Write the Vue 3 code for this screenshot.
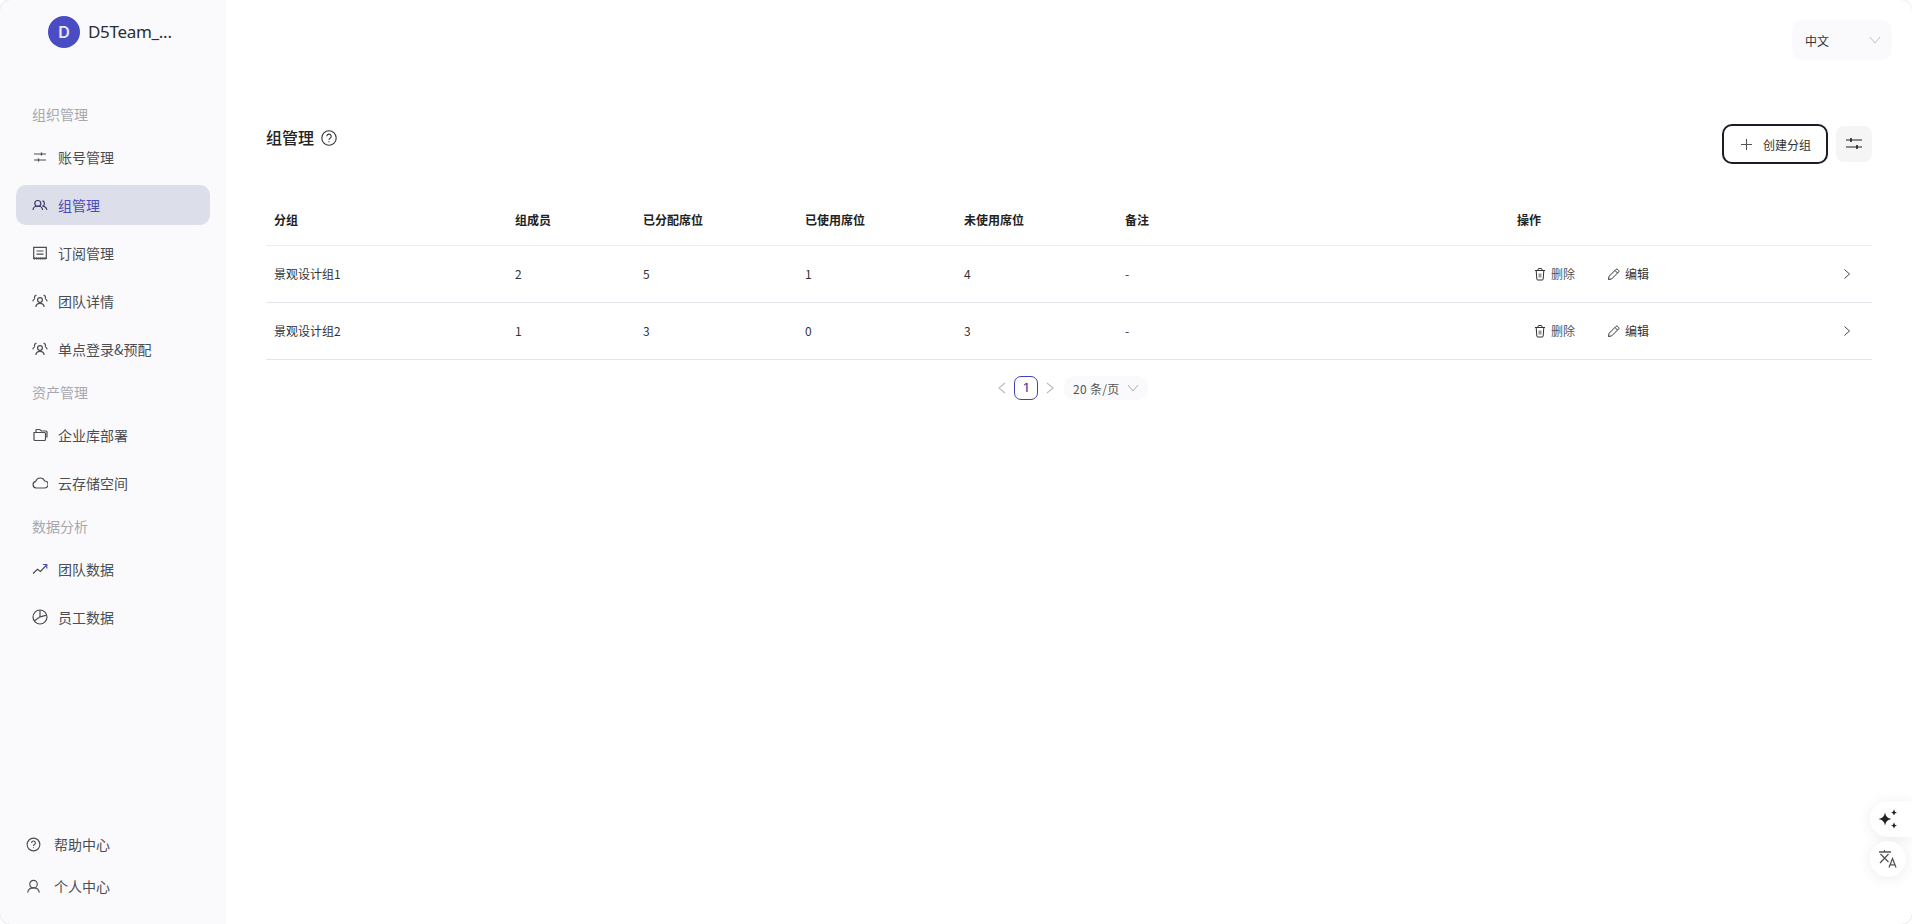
<script setup>
const groups = [
  { title: '组织管理', items: [
    { label: '账号管理', icon: 'sliders' },
    { label: '组管理', icon: 'users', active: true },
    { label: '订阅管理', icon: 'sub' },
    { label: '团队详情', icon: 'team' },
    { label: '单点登录&预配', icon: 'team' },
  ]},
  { title: '资产管理', items: [
    { label: '企业库部署', icon: 'folder' },
    { label: '云存储空间', icon: 'cloud' },
  ]},
  { title: '数据分析', items: [
    { label: '团队数据', icon: 'trend' },
    { label: '员工数据', icon: 'pie' },
  ]},
]
const columns = ['分组', '组成员', '已分配席位', '已使用席位', '未使用席位', '备注', '操作', '']
const rows = [
  ['景观设计组1', '2', '5', '1', '4', '-'],
  ['景观设计组2', '1', '3', '0', '3', '-'],
]
</script>

<template>
  <div class="page">
    <aside class="side">
      <div class="brand">
        <span class="avatar">D</span>
        <span class="brand-name">D5Team_...</span>
      </div>
      <nav class="nav">
        <template v-for="g in groups" :key="g.title">
          <div class="group-title">{{ g.title }}</div>
          <a v-for="it in g.items" :key="it.label" class="nav-item" :class="{ active: it.active }">
            <svg class="nav-ico" viewBox="0 0 16 16" fill="none" stroke="currentColor" stroke-width="1.200">
              <template v-if="it.icon === 'sliders'">
                <path d="M2 5h12M2 11h12" /><path d="M9.500 3.500v3M6.500 9.500v3" stroke-width="1.400" />
              </template>
              <template v-else-if="it.icon === 'users'">
                <circle cx="5.800" cy="6.500" r="3" /><path d="M1 13c.2-2.500 2-4 4.800-4s4.600 1.500 4.800 4M10.500 3.600a3 3 0 0 1 0 5.600c2.400.3 4 1.800 4.300 3.800" />
              </template>
              <template v-else-if="it.icon === 'sub'">
                <path d="M1.700 2.300h12.600v11H1.700zM4.500 6h7M4.500 9.200h7" /><path d="M1.700 13.500h12.600" stroke-width="1.800" stroke-dasharray="1.500 .6" />
              </template>
              <template v-else-if="it.icon === 'team'">
                <circle cx="8" cy="7" r="2.400" /><path d="M3.800 14c.3-2.200 2-3.600 4.200-3.600s3.900 1.400 4.200 3.600M4.500 2.300a1.900 1.900 0 0 0-1.500 3.200M.8 8.300c.2-1.200.9-2.200 2-2.600M11.500 2.300a1.900 1.900 0 0 1 1.500 3.200M15.200 8.300c-.2-1.200-.9-2.200-2-2.600" />
              </template>
              <template v-else-if="it.icon === 'folder'">
                <path d="M2 5.500v7a1 1 0 0 0 1 1h9.500a1 1 0 0 0 1-1V6.500a1 1 0 0 0-1-1H2zM4 5.500V3.500a1 1 0 0 1 1-1h2.800l1.500 1.500h4.700a1 1 0 0 1 1 1v5.500" />
              </template>
              <template v-else-if="it.icon === 'cloud'">
                <path d="M4.200 13a3.400 3.400 0 0 1-.5-6.700A4.800 4.800 0 0 1 12.700 6a3.500 3.500 0 0 1-.3 7z" />
              </template>
              <template v-else-if="it.icon === 'trend'">
                <path d="M1 12.500l4.500-4.300 3 2.300L14.500 4" /><path d="M10.800 3.500h4v4" stroke="#4a4fc4" />
              </template>
              <template v-else-if="it.icon === 'pie'">
                <circle cx="8" cy="8" r="7" /><path d="M8 1v6.800L2.200 12M8 7.800l6.800-1.600" />
              </template>
            </svg>
            <span>{{ it.label }}</span>
          </a>
        </template>
      </nav>
      <div class="side-foot">
        <a class="foot-item">
          <svg class="nav-ico" viewBox="0 0 16 16" fill="none" stroke="currentColor" stroke-width="1.200">
            <circle cx="8" cy="8" r="6.800" /><path d="M6 6.300a2 2 0 1 1 3 1.700c-.7.400-1 .8-1 1.500" /><path d="M8 11v.9" />
          </svg>
          <span>帮助中心</span>
        </a>
        <a class="foot-item">
          <svg class="nav-ico" viewBox="0 0 16 16" fill="none" stroke="currentColor" stroke-width="1.200">
            <circle cx="8" cy="5.500" r="4" /><path d="M1.800 14.500c.4-3 2.800-5 6.200-5s5.800 2 6.200 5" />
          </svg>
          <span>个人中心</span>
        </a>
      </div>
    </aside>

    <main class="main">
      <div class="top">
        <div class="lang">
          <span>中文</span>
          <svg class="chev" viewBox="0 0 12 12" fill="none" stroke="#bdbdc4" stroke-width="1"><path d="M1 3l5 6 5-6" /></svg>
        </div>
      </div>
      <div class="head">
        <div class="title">
          <h1>组管理</h1>
          <svg class="help" viewBox="0 0 16 16" fill="none" stroke="#333" stroke-width="1.100">
            <circle cx="8" cy="8" r="7.200" /><path d="M5.800 6.300a2.200 2.200 0 1 1 3.300 1.900c-.8.500-1.100.9-1.100 1.600" /><path d="M8 11.200v1" />
          </svg>
        </div>
        <div class="actions">
          <button class="create">
            <svg class="plus" viewBox="0 0 11 11" fill="none" stroke="#555" stroke-width="1.100"><path d="M5.500 0v11M0 5.500h11" /></svg>
            <span>创建分组</span>
          </button>
          <button class="filter">
            <svg viewBox="0 0 16 16" width="16" height="16" fill="none" stroke="#222" stroke-width="1.200"><path d="M0 4h16M0 11h16" /><path d="M5 2v4M11 9v4" stroke-width="1.600" /></svg>
          </button>
        </div>
      </div>

      <div class="table">
        <div class="tr th">
          <div v-for="(c, i) in columns" :key="i" class="cell">{{ c }}</div>
        </div>
        <div v-for="r in rows" :key="r[0]" class="tr">
          <div v-for="(v, i) in r" :key="i" class="cell">{{ v }}</div>
          <div class="cell ops">
            <span class="op">
              <svg viewBox="0 0 14 14" width="14" height="14" fill="none" stroke="#333" stroke-width="1"><path d="M2 3.500h10M5 3.500V2a.8.800 0 0 1 .8-.5h2.400A.8.800 0 0 1 9 2v1.500M3.200 3.500l.6 8.500a1 1 0 0 0 1 1h4.400a1 1 0 0 0 1-1l.6-8.500" /><path d="M5.500 6.500h3v4h-3z" fill="#999" stroke="none" /></svg>
              <span class="op-del">删除</span>
            </span>
            <span class="op">
              <svg viewBox="0 0 14 14" width="14" height="14" fill="none" stroke="#333" stroke-width="1"><path d="M1.500 12.500l.6-3.200 7-7a1 1 0 0 1 1.400 0l1.200 1.200a1 1 0 0 1 0 1.400l-7 7zM8 3.500l2.500 2.500" /></svg>
              <span>编辑</span>
            </span>
          </div>
          <div class="cell more">
            <svg viewBox="0 0 12 12" width="12" height="12" fill="none" stroke="#444" stroke-width="1"><path d="M3.500 1.500l5 4.500-5 4.500" /></svg>
          </div>
        </div>
      </div>

      <div class="pager">
        <svg class="pg-arrow" viewBox="0 0 10 12" fill="none" stroke="#bbb" stroke-width="1.100"><path d="M8 1L2 6l6 5" /></svg>
        <span class="pg-num">1</span>
        <svg class="pg-arrow" viewBox="0 0 10 12" fill="none" stroke="#bbb" stroke-width="1.100"><path d="M2 1l6 5-6 5" /></svg>
        <div class="pg-size">
          <span>20 条/页</span>
          <svg viewBox="0 0 12 12" width="12" height="12" fill="none" stroke="#aaa" stroke-width="1"><path d="M1 3l5 6 5-6" /></svg>
        </div>
      </div>
    </main>

    <div class="fab fab-a">
      <svg viewBox="0 0 20 20" width="20" height="20" fill="#222">
        <path d="M7 3.500Q7.800 9.200 13.500 10 7.800 10.800 7 16.500 6.200 10.800 .5 10 6.200 9.200 7 3.500z" />
        <path d="M16 .5Q16.400 3.100 19 3.500 16.400 3.900 16 6.500 15.600 3.900 13 3.500 15.600 3.100 16 .5zM16 13.500Q16.400 16.100 19 16.500 16.400 16.900 16 19.500 15.600 16.900 13 16.500 15.600 16.100 16 13.500z" />
      </svg>
    </div>
    <div class="fab fab-b">
      <svg viewBox="0 0 20 20" width="20" height="20" fill="none" stroke="#555" stroke-width="1.300">
        <path d="M1 3h12M6.500 1v2M2.500 5l8 8M10.500 5L2 14" />
        <path d="M11 18.500l3.500-9 3.500 9M12 15.800h5" />
      </svg>
    </div>
    <div class="corners" aria-hidden="true"></div>
  </div>
</template>

<style>
html, body { margin: 0; background: #fff; }
</style>

<style scoped>
.page {
  position: relative;
  display: flex;
  height: 924px;
  overflow: hidden;
  background: #fff;
  font-family: "Noto Sans CJK SC", "Noto Sans", sans-serif;
  color: #333;
}
.corners {
  position: absolute;
  inset: -1px;
  border: 1px solid #e9e9ec;
  border-radius: 12px;
  box-shadow: 0 0 0 12px #fff;
  pointer-events: none;
}
.side {
  width: 226px;
  flex: none;
  box-sizing: border-box;
  background: #fafafc;
  display: flex;
  flex-direction: column;
}
.brand {
  height: 64px;
  padding-left: 48px;
  display: flex;
  align-items: center;
  gap: 8px;
}
.avatar {
  width: 32px;
  height: 32px;
  border-radius: 50%;
  background: #4a4cc4;
  color: #e8e8ff;
  font: 600 16px/32px Inter, sans-serif;
  text-align: center;
}
.brand-name {
  font: 400 17px/24px "Noto Sans", sans-serif;
  color: #2a2d34;
  letter-spacing: -0.3px;
  margin-top: -1px;
}
.nav {
  padding: 35px 16px 0;
  flex: 1;
}
.group-title {
  height: 30px;
  line-height: 30px;
  margin-bottom: 8px;
  padding-left: 16px;
  font-size: 14px;
  color: #a6a8ae;
}
.nav-item {
  height: 40px;
  margin-bottom: 8px;
  padding-left: 16px;
  border-radius: 10px;
  display: flex;
  align-items: center;
  gap: 10px;
  font-size: 14px;
  color: #4b4d52;
}
.nav-item.active {
  background: #dcdee9;
  color: #4a4cb8;
}
.nav-item.active .nav-ico { color: #3c3e66; }
.nav-ico { width: 16px; height: 16px; flex: none; color: #4b4d52; }
.side-foot {
  padding: 0 0 24px 26px;
  display: flex;
  flex-direction: column;
  gap: 14px;
}
.foot-item {
  height: 28px;
  display: flex;
  align-items: center;
  gap: 13px;
  font-size: 14px;
  color: #4b4d52;
}
.foot-item .nav-ico { width: 15px; height: 15px; }
.main {
  flex: 1;
  min-width: 0;
  padding: 20px 40px 0;
}
.top {
  display: flex;
  justify-content: flex-end;
  margin-right: -20px;
}
.lang {
  width: 100px;
  height: 40px;
  box-sizing: border-box;
  padding: 0 11px 0 13px;
  border-radius: 10px;
  background: #fafafc;
  display: flex;
  align-items: center;
  justify-content: space-between;
  font-size: 12px;
}
.chev { width: 12px; height: 12px; }
.head {
  margin-top: 64px;
  height: 40px;
  display: flex;
  justify-content: space-between;
  align-items: center;
}
.title {
  display: flex;
  align-items: center;
  gap: 7px;
  margin-top: -14px;
}
h1 {
  margin: 0;
  font-size: 16px;
  line-height: 24px;
  font-weight: 500;
  color: #222;
}
.help { width: 16px; height: 16px; margin-top: 2px; }
.actions { display: flex; align-items: center; gap: 8px; }
.create {
  width: 106px;
  height: 40px;
  box-sizing: border-box;
  border: 2px solid #1a1d24;
  border-radius: 10px;
  background: #fff;
  display: flex;
  align-items: center;
  gap: 11px;
  padding: 0 0 0 17px;
  font: 12px "Noto Sans CJK SC", sans-serif;
  color: #333;
}
.plus { width: 11px; height: 11px; }
.filter {
  width: 36px;
  height: 36px;
  border: 0;
  border-radius: 8px;
  background: #f5f5f6;
  padding: 0;
  display: flex;
  align-items: center;
  justify-content: center;
}
.table { margin-top: 35px; }
.tr {
  display: grid;
  grid-template-columns: 241px 128px 162px 159px 161px 392px 332px 31px;
  height: 56px;
  align-items: center;
  border-bottom: 1px solid #e4e5ea;
  font-size: 12px;
  color: #333;
}
.th {
  height: 46px;
  align-items: start;
  color: #222;
  font-weight: 600;
  border-bottom-color: #eeeef1;
}
.th .cell { line-height: 18px; padding-top: 12px; }
.cell { padding-left: 8px; line-height: 18px; }
.ops { display: flex; gap: 32px; padding-left: 24px; }
.op { display: inline-flex; align-items: center; gap: 4px; }
.op-del { color: #555; }
.more { padding-left: 0; display: flex; }
.pager {
  margin-top: 16px;
  padding-left: 731px;
  display: flex;
  align-items: center;
}
.pg-arrow { width: 10px; height: 12px; }
.pg-num {
  width: 24px;
  height: 24px;
  box-sizing: border-box;
  margin: 0 7px;
  border: 1px solid #4044b0;
  border-radius: 7px;
  font: 500 12px/22px Inter, sans-serif;
  text-align: center;
  color: #4044b0;
}
.pg-size {
  margin-left: 9px;
  width: 84px;
  height: 24px;
  box-sizing: border-box;
  padding-left: 9px;
  border-radius: 10px;
  background: #fafafc;
  display: flex;
  align-items: center;
  gap: 7px;
  font-size: 12px;
  letter-spacing: .3px;
  color: #555;
}
.fab {
  position: absolute;
  background: #fff;
  display: flex;
  align-items: center;
  justify-content: center;
  box-shadow: 0 2px 14px rgba(0, 0, 0, .08);
}
.fab-a {
  left: 1870px;
  top: 801px;
  width: 42px;
  height: 36px;
  box-sizing: border-box;
  padding-right: 6px;
  border-radius: 18px 0 0 18px;
}
.fab-b {
  left: 1870px;
  top: 841px;
  width: 36px;
  height: 36px;
  border-radius: 50%;
}
</style>
